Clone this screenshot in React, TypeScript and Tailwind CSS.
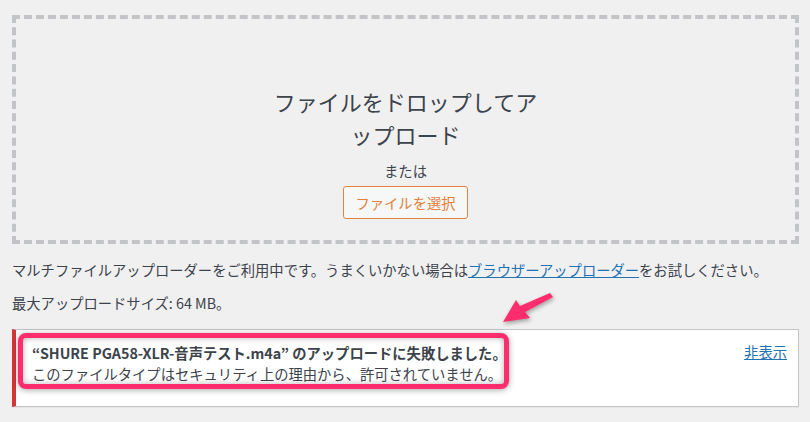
import React from "react";

export default function App() {
  const font = { fontFamily: '"Noto Sans CJK JP", "Noto Sans", sans-serif' };
  return (
    <div
      className="relative w-[810px] h-[422px] overflow-hidden bg-[#f0f0f1] pl-[12px] pr-[11px] pt-[15px] text-[#3c434a]"
      style={font}
    >
      {/* drop area */}
      <div className="h-[229px] border-4 border-dashed border-[#c3c4c7] flex flex-col items-center">
        <p className="mt-[66px] w-[275px] text-center text-[22px] leading-[33px] text-[#3c434a]">
          ファイルをドロップしてアップロード
        </p>
        <p className="mt-[9px] text-[14.3px] leading-[22px]">または</p>
        <button className="mt-[4px] h-[33px] px-[11px] rounded-[3px] border border-[#e2843f] bg-[#f6f7f7] text-[14.3px] text-[#e5803d] leading-[31px]">
          ファイルを選択
        </button>
      </div>

      <p className="mt-[15px] text-[14.3px] leading-[22px]">
        マルチファイルアップローダーをご利用中です。うまくいかない場合は
        <a className="text-[#2271b1] underline" href="#">
          ブラウザーアップローダー
        </a>
        をお試しください。
      </p>
      <p className="mt-[11px] text-[14.3px] leading-[22px]">最大アップロードサイズ: 64 MB。</p>

      {/* notice */}
      <div className="mt-[15px] h-[78px] bg-white border border-[#c3c4c7] border-l-4 border-l-[#d63638] shadow-[0_1px_1px_rgba(0,0,0,0.04)] flex justify-between items-start pl-[2px] pr-[11px]">
        <div className="mt-[3px] w-[491px] rounded-[8px] border-[5px] border-[#ff2d6e] bg-white pl-[9px] pt-[4px] shadow-[0_1px_6px_rgba(0,0,0,0.35),inset_0_0_6px_rgba(0,0,0,0.3)]">
          <p className="text-[14.3px] leading-[21px] font-semibold whitespace-nowrap">
            “SHURE PGA58-XLR-音声テスト.m4a” のアップロードに失敗しました。
          </p>
          <p className="text-[14.3px] leading-[21px] whitespace-nowrap">
            このファイルタイプはセキュリティ上の理由から、許可されていません。
          </p>
        </div>
        <a href="#" className="mt-[11px] text-[14.3px] leading-[21px] text-[#2271b1] underline">
          非表示
        </a>
      </div>

      {/* arrow annotation */}
      <svg
        className="absolute left-[495px] top-[287px] drop-shadow-[1px_2px_2px_rgba(0,0,0,0.35)]"
        width="66"
        height="42"
        viewBox="495 287 66 42"
      >
        <polygon
          points="503,322 516,300 520,306 550,293 553,297 525,312 530,318"
          fill="#ff2d6e"
        />
      </svg>
    </div>
  );
}
